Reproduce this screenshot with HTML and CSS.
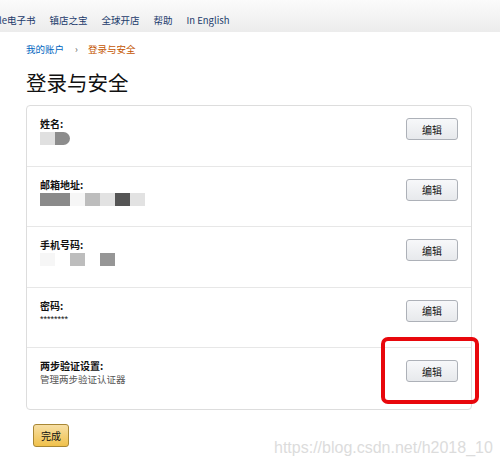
FILE: index.html
```html
<!DOCTYPE html>
<html lang="zh">
<head>
<meta charset="utf-8">
<link rel="stylesheet" href="styles.css">
</head>
<body>
<div class="topbar">
  <nav class="nav">
    <a class="nav-link">le电子书</a>
    <a class="nav-link">镇店之宝</a>
    <a class="nav-link">全球开店</a>
    <a class="nav-link">帮助</a>
    <a class="nav-link">In English</a>
  </nav>
</div>
<main class="page">
  <div class="crumbs">
    <a class="crumb-link">我的账户</a>
    <span class="crumb-sep">›</span>
    <span class="crumb-current">登录与安全</span>
  </div>
  <h1 class="title">登录与安全</h1>
  <div class="box">
    <div class="row">
      <div class="info">
        <div class="label">姓名:</div>
        <div class="blur">
          <span class="px c1"></span><span class="px c2 round"></span>
        </div>
      </div>
      <button class="edit">编辑</button>
    </div>
    <div class="row">
      <div class="info">
        <div class="label">邮箱地址:</div>
        <div class="blur">
          <span class="px c3"></span><span class="px c3"></span><span class="px c4"></span><span class="px c5"></span><span class="px c6"></span><span class="px c7"></span><span class="px c6"></span>
        </div>
      </div>
      <button class="edit">编辑</button>
    </div>
    <div class="row">
      <div class="info">
        <div class="label">手机号码:</div>
        <div class="blur short">
          <span class="px c4"></span><span class="px c0"></span><span class="px c5"></span><span class="px c0"></span><span class="px c8"></span>
        </div>
      </div>
      <button class="edit">编辑</button>
    </div>
    <div class="row">
      <div class="info">
        <div class="label">密码:</div>
        <div class="value">********</div>
      </div>
      <button class="edit">编辑</button>
    </div>
    <div class="row last">
      <div class="info">
        <div class="label">两步验证设置:</div>
        <div class="desc">管理两步验证认证器</div>
      </div>
      <div class="edit-wrap">
        <button class="edit">编辑</button>
        <span class="highlight"></span>
      </div>
    </div>
  </div>
  <div class="actions">
    <button class="done">完成</button>
  </div>
</main>
<span class="watermark">https://blog.csdn.net/h2018_10</span>
</body>
</html>
```
FILE: styles.css
```css
* { box-sizing: border-box; }
html, body {
  margin: 0;
  padding: 0;
  background: #fff;
  font-family: "Noto Sans CJK SC", "Noto Sans", "Liberation Sans", sans-serif;
  color: #111;
  width: 500px;
  height: 469px;
  overflow: hidden;
}
body { position: relative; }
.topbar {
  height: 32px;
  background: linear-gradient(#fbfbfb, #ececec);
  display: flex;
  align-items: center;
}
.nav {
  display: flex;
  gap: 14px;
  margin-left: -1px;
  font-size: 9.5px;
  line-height: 14px;
  padding-top: 7px;
}
.nav-link {
  color: #1c3b6c;
  text-decoration: none;
}
.page {
  padding: 0 28px 0 26px;
}
.crumbs {
  display: flex;
  align-items: center;
  margin-top: 10px;
  font-size: 9.5px;
  line-height: 14px;
}
.crumb-link { color: #0066c0; }
.crumb-sep { color: #555; margin: 0 10px 0 11px; }
.crumb-current { color: #c45500; }
.title {
  margin: 12px 0 0;
  font-size: 20.5px;
  line-height: 28px;
  font-weight: 400;
  color: #111;
}
.box {
  margin-top: 9px;
  width: 446px;
  border: 1px solid #ddd;
  border-radius: 4px;
}
.row {
  height: 60.6px;
  border-bottom: 1px solid #e7e7e7;
  display: flex;
  align-items: flex-start;
  justify-content: space-between;
  padding: 11px 13px 0 13px;
}
.row.last { border-bottom: none; }
.label {
  font-size: 10px;
  line-height: 14px;
  font-weight: 700;
  color: #111;
}
.blur {
  display: flex;
  margin-top: 1px;
  height: 13px;
}
.px {
  width: 15px;
  height: 13px;
  display: block;
}
.round { border-radius: 0 7px 7px 0; }
.c0 { background: #fff; }
.c1 { background: #e0e0e0; }
.c2 { background: #8c8c8c; }
.c3 { background: #8a8a8a; }
.c4 { background: #f6f6f6; }
.c5 { background: #bdbdbd; }
.c6 { background: #e2e2e2; }
.c7 { background: #555; }
.c8 { background: #969696; }
.value {
  font-size: 9px;
  line-height: 10px;
  color: #111;
  font-family: "Liberation Sans", sans-serif;
  margin-top: 1px;
}
.desc {
  font-size: 9.5px;
  line-height: 13px;
  color: #555;
}
.edit {
  margin-top: 1px;
  width: 52px;
  height: 22px;
  padding: 0;
  border: 1px solid #adb1b8;
  border-radius: 3px;
  background: linear-gradient(#f7f8fa, #e7e9ec);
  font-family: inherit;
  font-size: 10px;
  color: #111;
}
.edit-wrap {
  position: relative;
  display: flex;
}
.highlight {
  position: absolute;
  left: -25px;
  top: -22px;
  width: 98px;
  height: 67px;
  border: 4px solid #e8070c;
  border-radius: 7px;
}
.actions {
  display: flex;
  align-items: center;
  margin-top: 14px;
  padding-left: 7px;
}
.done {
  width: 36px;
  height: 23px;
  padding: 0;
  border: 1px solid #a88734;
  border-radius: 3px;
  background: linear-gradient(#f7dfa5, #f0c14b);
  font-family: inherit;
  font-size: 10px;
  color: #111;
}
.watermark {
  position: absolute;
  left: 274px;
  top: 438px;
  font-family: "Liberation Sans", sans-serif;
  font-size: 16px;
  line-height: 20px;
  color: #dcdcdc;
  white-space: nowrap;
}
```
